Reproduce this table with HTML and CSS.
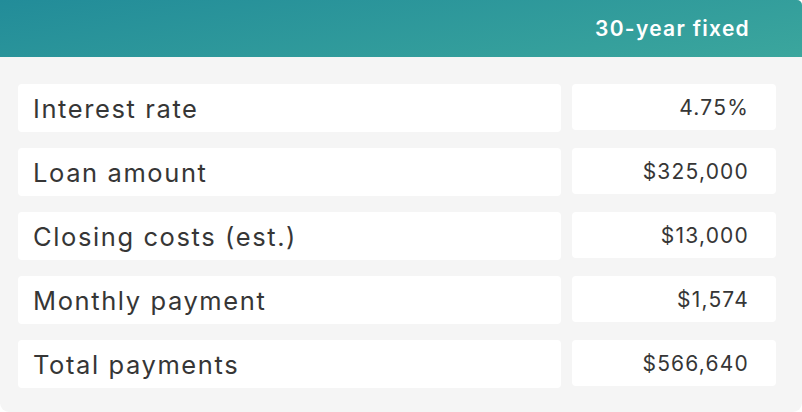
FILE: index.html
```html
<!DOCTYPE html>
<html>
<head>
<meta charset="utf-8">
<link rel="stylesheet" href="styles.css">
</head>
<body>
<div class="card">
  <div class="header"><span class="plan">30-year fixed</span></div>
  <div class="rows">
    <div class="row"><div class="label">Interest rate</div><div class="value">4.75%</div></div>
    <div class="row"><div class="label">Loan amount</div><div class="value">$325,000</div></div>
    <div class="row"><div class="label">Closing costs (est.)</div><div class="value">$13,000</div></div>
    <div class="row"><div class="label">Monthly payment</div><div class="value">$1,574</div></div>
    <div class="row"><div class="label">Total payments</div><div class="value">$566,640</div></div>
  </div>
</div>
</body>
</html>
```
FILE: styles.css
```css
html, body { margin: 0; padding: 0; background: #ffffff; }
body { font-family: Inter, "Noto Sans", sans-serif; color: #363636; }
.card {
  width: 802px;
  height: 412px;
  background: #f5f5f5;
  border-radius: 0 5px 9px 9px;
  overflow: hidden;
}
.header {
  height: 57px;
  background: linear-gradient(170deg, #228c99 0%, #3ba69d 100%);
  display: flex;
  align-items: center;
  justify-content: flex-end;
  padding-right: 52px;
}
.plan {
  color: #ffffff;
  font-weight: 600;
  font-size: 21px;
  letter-spacing: 1.3px;
}
.rows {
  padding: 27px 26px 0 18px;
  display: flex;
  flex-direction: column;
  gap: 16px;
}
.row {
  display: flex;
  align-items: flex-start;
  gap: 11px;
}
.label {
  flex: 1;
  height: 48px;
  background: #ffffff;
  border-radius: 4px;
  display: flex;
  align-items: center;
  padding-left: 15px;
  font-size: 25.5px;
  letter-spacing: 1.6px;
}
.value {
  width: 204px;
  height: 46px;
  box-sizing: border-box;
  background: #ffffff;
  border-radius: 4px;
  display: flex;
  align-items: center;
  justify-content: flex-end;
  padding-right: 27px;
  font-size: 21px;
  letter-spacing: 1.2px;
}
```
